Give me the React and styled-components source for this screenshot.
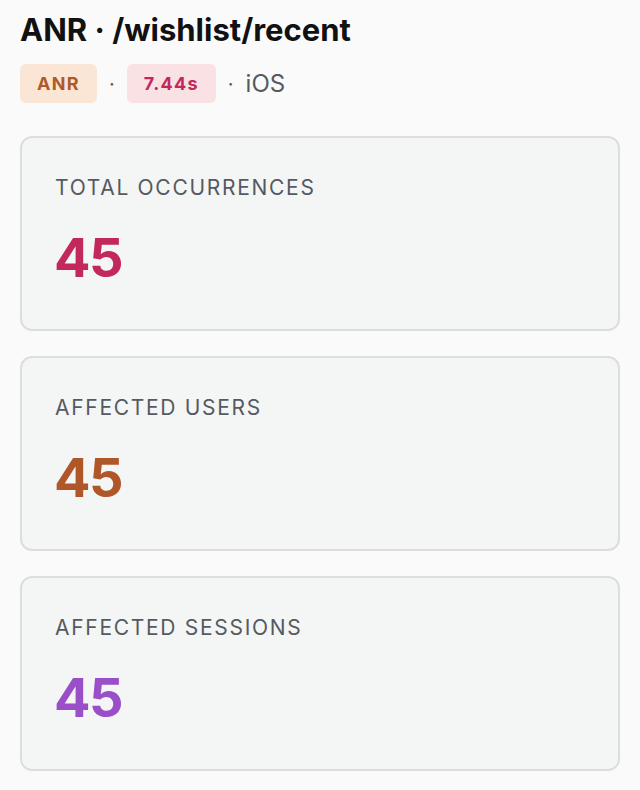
import React from 'react'
import styled, { createGlobalStyle } from 'styled-components'

const GlobalStyle = createGlobalStyle`
  body {
    margin: 0;
    background: #fafafa;
    font-family: Inter, "Noto Sans", sans-serif;
    -webkit-font-smoothing: antialiased;
  }
`

const stats = [
  { id: 'occ', label: 'Total occurrences', value: 45, color: '#c2285b' },
  { id: 'users', label: 'Affected users', value: 45, color: '#b0572a' },
  { id: 'sessions', label: 'Affected sessions', value: 45, color: '#9a4fc9' },
]

export default function App() {
  return (
    <Page>
      <GlobalStyle />
      <Title>ANR · /wishlist/recent</Title>
      <Meta>
        <Badge $bg="#fbe5d5" $fg="#b1582a">ANR</Badge>
        <Dot>·</Dot>
        <Badge $bg="#f9e1e4" $fg="#c2285b">7.44s</Badge>
        <Dot>·</Dot>
        <Platform>iOS</Platform>
      </Meta>
      <Cards>
        {stats.map((s) => (
          <Card key={s.id}>
            <Label>{s.label}</Label>
            <Value $color={s.color}>{s.value}</Value>
          </Card>
        ))}
      </Cards>
    </Page>
  )
}

const Page = styled.div`
  padding: 11px 20px 20px;
`

const Title = styled.h1`
  margin: 0;
  font-size: 31px;
  font-weight: 700;
  line-height: 38px;
  color: #111;
`

const Meta = styled.div`
  display: flex;
  align-items: center;
  gap: 12px;
  margin-top: 15px;
  color: #555a60;
`

const Badge = styled.span`
  display: inline-flex;
  align-items: center;
  height: 39px;
  padding: 0 17px;
  border-radius: 6px;
  background: ${(p) => p.$bg};
  color: ${(p) => p.$fg};
  font-size: 18px;
  font-weight: 700;
  letter-spacing: 1.3px;
`

const Dot = styled.span`
  font-size: 20px;
`

const Platform = styled.span`
  font-size: 24px;
`

const Cards = styled.div`
  display: flex;
  flex-direction: column;
  gap: 25px;
  margin-top: 33px;
`

const Card = styled.div`
  height: 195px;
  box-sizing: border-box;
  padding: 38px 33px 0;
  border: 2px solid #dcdddd;
  border-radius: 12px;
  background: #f4f5f5;
`

const Label = styled.div`
  font-size: 21px;
  line-height: 24px;
  text-transform: uppercase;
  letter-spacing: 1.7px;
  color: #555a60;
`

const Value = styled.div`
  margin: 26px 0 0 -1px;
  font-size: 54px;
  font-weight: 700;
  line-height: 64px;
  letter-spacing: -1.5px;
  color: ${(p) => p.$color};
`
